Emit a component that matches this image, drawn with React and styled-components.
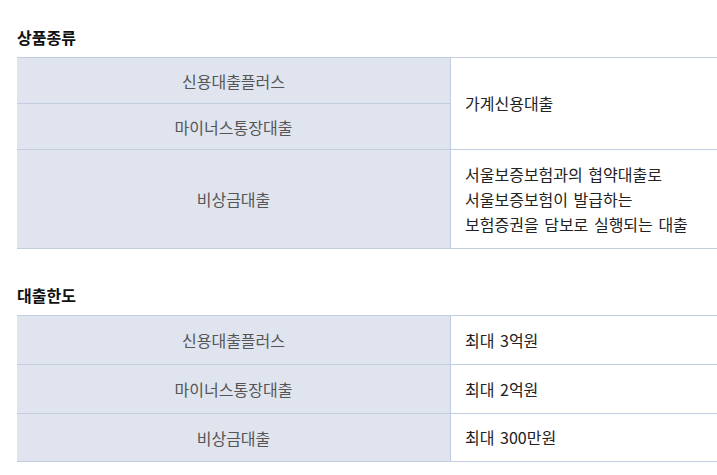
import React from "react";
import styled, { createGlobalStyle } from "styled-components";

const GlobalStyle = createGlobalStyle`
  body {
    margin: 0;
    background: #fff;
    font-family: "Noto Sans CJK KR", "Noto Sans", sans-serif;
  }
`;

const Page = styled.div`
  padding: 26px 0 0 17px;
`;

const Section = styled.section`
  margin-bottom: 35px;

  &:last-child {
    margin-bottom: 0;
  }
`;

const Heading = styled.h3`
  margin: 0 0 9px;
  font-size: 16px;
  line-height: 22px;
  font-weight: 700;
  color: #111;
`;

const Table = styled.div`
  display: grid;
  grid-template-columns: 434px 1fr;
  border-top: 1px solid #c3cde0;
`;

const Label = styled.div`
  display: flex;
  align-items: center;
  justify-content: center;
  height: ${(p) => p.$h}px;
  background: #dfe4ee;
  color: #555;
  font-size: 16px;
  border-bottom: 1px solid #c3cde0;
  border-right: 1px solid #c3cde0;
`;

const Value = styled.div`
  display: flex;
  align-items: center;
  padding-left: 14px;
  color: #222;
  font-size: 16px;
  line-height: 25px;
  word-spacing: 2px;
  border-bottom: 1px solid #c3cde0;
  grid-row: span ${(p) => p.$span || 1};
  white-space: pre-line;
`;

const products = [
  { label: "신용대출플러스", h: 45 },
  { label: "마이너스통장대출", h: 45 },
  { label: "비상금대출", h: 98 },
];

const limits = [
  { label: "신용대출플러스", value: "최대 3억원", h: 48 },
  { label: "마이너스통장대출", value: "최대 2억원", h: 48 },
  { label: "비상금대출", value: "최대 300만원", h: 47 },
];

export default function App() {
  return (
    <Page>
      <GlobalStyle />
      <Section>
        <Heading>상품종류</Heading>
        <Table>
          <Label $h={products[0].h}>{products[0].label}</Label>
          <Value $span={2}>가계신용대출</Value>
          <Label $h={products[1].h}>{products[1].label}</Label>
          <Label $h={products[2].h}>{products[2].label}</Label>
          <Value>
            {"서울보증보험과의 협약대출로\n서울보증보험이 발급하는\n보험증권을 담보로 실행되는 대출"}
          </Value>
        </Table>
      </Section>
      <Section>
        <Heading>대출한도</Heading>
        <Table>
          {limits.map((row) => (
            <React.Fragment key={row.label}>
              <Label $h={row.h}>{row.label}</Label>
              <Value>{row.value}</Value>
            </React.Fragment>
          ))}
        </Table>
      </Section>
    </Page>
  );
}
